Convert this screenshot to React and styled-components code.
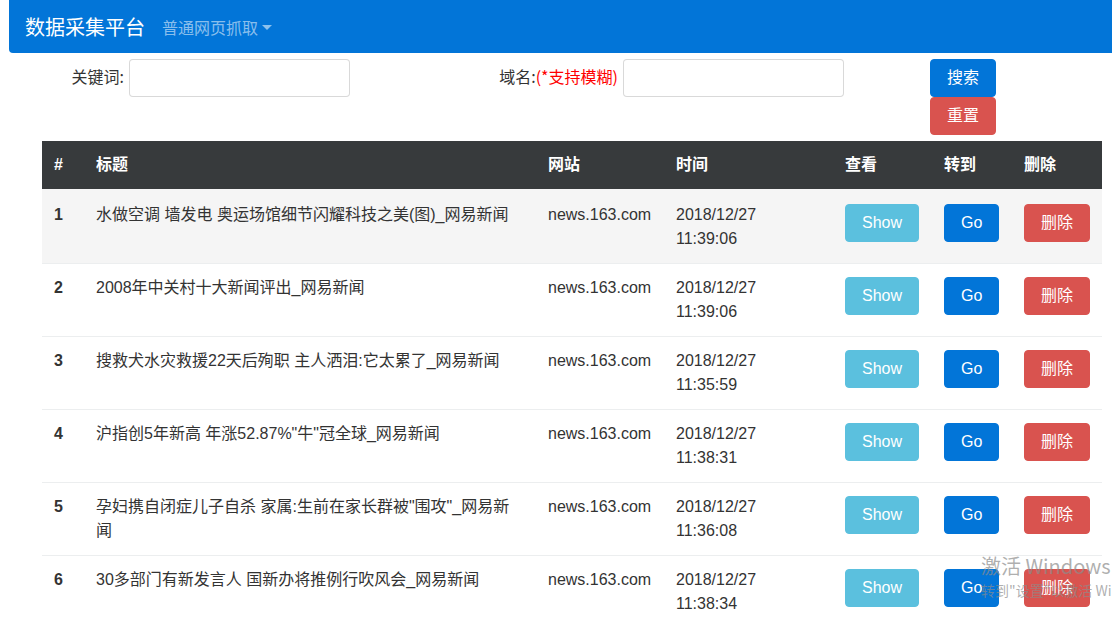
import React from 'react'
import styled, { createGlobalStyle } from 'styled-components'

const GlobalStyle = createGlobalStyle`
  html, body {
    margin: 0;
    padding: 0;
    overflow: hidden;
    background: #fff;
  }
  body {
    font-family: "Liberation Sans", Arial, "Noto Sans CJK SC", sans-serif;
    font-size: 16px;
    line-height: 1.5;
    color: #292b2c;
  }
  * { box-sizing: border-box; }
`

const rows = [
  { id: 1, title: '水做空调 墙发电 奥运场馆细节闪耀科技之美(图)_网易新闻', date: '2018/12/27', time: '11:39:06' },
  { id: 2, title: '2008年中关村十大新闻评出_网易新闻', date: '2018/12/27', time: '11:39:06' },
  { id: 3, title: '搜救犬水灾救援22天后殉职 主人洒泪:它太累了_网易新闻', date: '2018/12/27', time: '11:35:59' },
  { id: 4, title: '沪指创5年新高 年涨52.87%"牛"冠全球_网易新闻', date: '2018/12/27', time: '11:38:31' },
  { id: 5, title: '孕妇携自闭症儿子自杀 家属:生前在家长群被"围攻"_网易新闻', date: '2018/12/27', time: '11:36:08' },
  { id: 6, title: '30多部门有新发言人 国新办将推例行吹风会_网易新闻', date: '2018/12/27', time: '11:38:34' },
]

const App = () => {
  return (
    <Page>
      <GlobalStyle />
      <Navbar>
        <Brand>数据采集平台</Brand>
        <NavLink>
          普通网页抓取
          <Caret />
        </NavLink>
      </Navbar>

      <SearchForm>
        <Label>关键词:</Label>
        <Input />
        <Label>
          域名:<Hint>(*支持模糊)</Hint>
        </Label>
        <Input />
        <span />
        <ButtonStack>
          <Btn variant="primary">搜索</Btn>
          <Btn variant="danger">重置</Btn>
        </ButtonStack>
      </SearchForm>

      <Table>
        <colgroup>
          <col style={{ width: 42 }} />
          <col style={{ width: 452 }} />
          <col style={{ width: 128 }} />
          <col style={{ width: 169 }} />
          <col style={{ width: 99 }} />
          <col style={{ width: 80 }} />
          <col style={{ width: 90 }} />
        </colgroup>
        <thead>
          <tr>
            <Th>#</Th>
            <Th>标题</Th>
            <Th>网站</Th>
            <Th>时间</Th>
            <Th>查看</Th>
            <Th>转到</Th>
            <Th>删除</Th>
          </tr>
        </thead>
        <tbody>
          {rows.map((r) => (
            <Row key={r.id} hovered={r.id === 1}>
              <Td bold>{r.id}</Td>
              <Td>{r.title}</Td>
              <Td>news.163.com</Td>
              <Td>
                {r.date}
                <br />
                {r.time}
              </Td>
              <Td><Btn variant="info">Show</Btn></Td>
              <Td><Btn variant="primary">Go</Btn></Td>
              <Td><Btn variant="danger">删除</Btn></Td>
            </Row>
          ))}
        </tbody>
      </Table>

      <Watermark>
        <WmTitle>激活 Windows</WmTitle>
        <WmSub>转到"设置"以激活 Windows。</WmSub>
      </Watermark>
    </Page>
  )
}

export default App

const Page = styled.div`
  width: 1112px;
  height: 622px;
  position: relative;
`

const Navbar = styled.nav`
  margin-left: 9px;
  height: 53px;
  background: #0275d8;
  border-bottom-left-radius: 4px;
  display: flex;
  align-items: center;
  padding: 0 16px;
`

const Brand = styled.span`
  font-size: 20px;
  color: #fff;
  font-family: "Noto Sans CJK SC", sans-serif;
  margin-right: 17px;
  line-height: 30px;
`

const NavLink = styled.span`
  font-size: 16px;
  color: rgba(255, 255, 255, 0.55);
  font-family: "Noto Sans CJK SC", sans-serif;
  display: flex;
  align-items: center;
`

const Caret = styled.i`
  display: inline-block;
  margin-left: 4px;
  margin-top: 2px;
  border-top: 5px solid rgba(255, 255, 255, 0.55);
  border-left: 5px solid transparent;
  border-right: 5px solid transparent;
`

const SearchForm = styled.form`
  margin-top: 6px;
  margin-left: 9px;
  display: grid;
  grid-template-columns: 120px 221px 273px 221px 86px 66px;
  align-items: start;
`

const Label = styled.label`
  height: 34px;
  display: flex;
  align-items: center;
  justify-content: flex-end;
  padding-right: 5px;
  color: #333;
  font-size: 16px;
  font-family: "Noto Sans CJK SC", sans-serif;
`

const Hint = styled.span`
  color: #ff0000;
`

const Input = styled.input`
  height: 38px;
  width: 221px;
  border: 1px solid rgba(0, 0, 0, 0.15);
  border-radius: 4px;
  padding: 6px 12px;
  font-size: 16px;
  background: #fff;
`

const ButtonStack = styled.div`
  display: flex;
  flex-direction: column;
`

const colors = {
  primary: '#0275d8',
  danger: '#d9534f',
  info: '#5bc0de',
}

const Btn = styled.button.attrs({ type: 'button' })`
  display: inline-block;
  height: 38px;
  padding: 0 16px;
  border: 1px solid ${(p) => colors[p.variant]};
  border-radius: 4px;
  background: ${(p) => colors[p.variant]};
  color: #fff;
  font-size: 16px;
  line-height: 36px;
  font-family: "Liberation Sans", Arial, "Noto Sans CJK SC", sans-serif;
  white-space: nowrap;
  cursor: pointer;
`

const Table = styled.table`
  margin: 6px 0 0 42px;
  width: 1060px;
  table-layout: fixed;
  border-collapse: collapse;
`

const Th = styled.th`
  background: #373a3c;
  color: #fff;
  text-align: left;
  font-weight: bold;
  padding: 12px;
  height: 48px;
  line-height: 24px;
  font-family: "Liberation Sans", Arial, "Noto Sans CJK SC", sans-serif;
`

const Row = styled.tr`
  background: ${(p) => (p.hovered ? '#f5f5f5' : '#fff')};

  &:first-child td {
    border-top: 2px solid #f5f5f5;
  }
`

const Td = styled.td`
  padding: 12px;
  vertical-align: top;
  border-top: 1px solid #eceeef;
  line-height: 24px;
  color: #333;
  font-weight: ${(p) => (p.bold ? 'bold' : 'normal')};
  font-family: "Liberation Sans", Arial, "Noto Sans CJK SC", sans-serif;
  height: 73px;

  button {
    margin-top: 1px;
  }
`

const Watermark = styled.div`
  position: absolute;
  left: 981px;
  top: 552px;
  white-space: nowrap;
  pointer-events: none;
  font-family: "Noto Sans CJK SC", sans-serif;
  color: rgba(140, 140, 140, 0.7);
`

const WmTitle = styled.div`
  font-size: 20px;
  line-height: 28px;
`

const WmSub = styled.div`
  font-size: 14px;
  line-height: 20px;
`
